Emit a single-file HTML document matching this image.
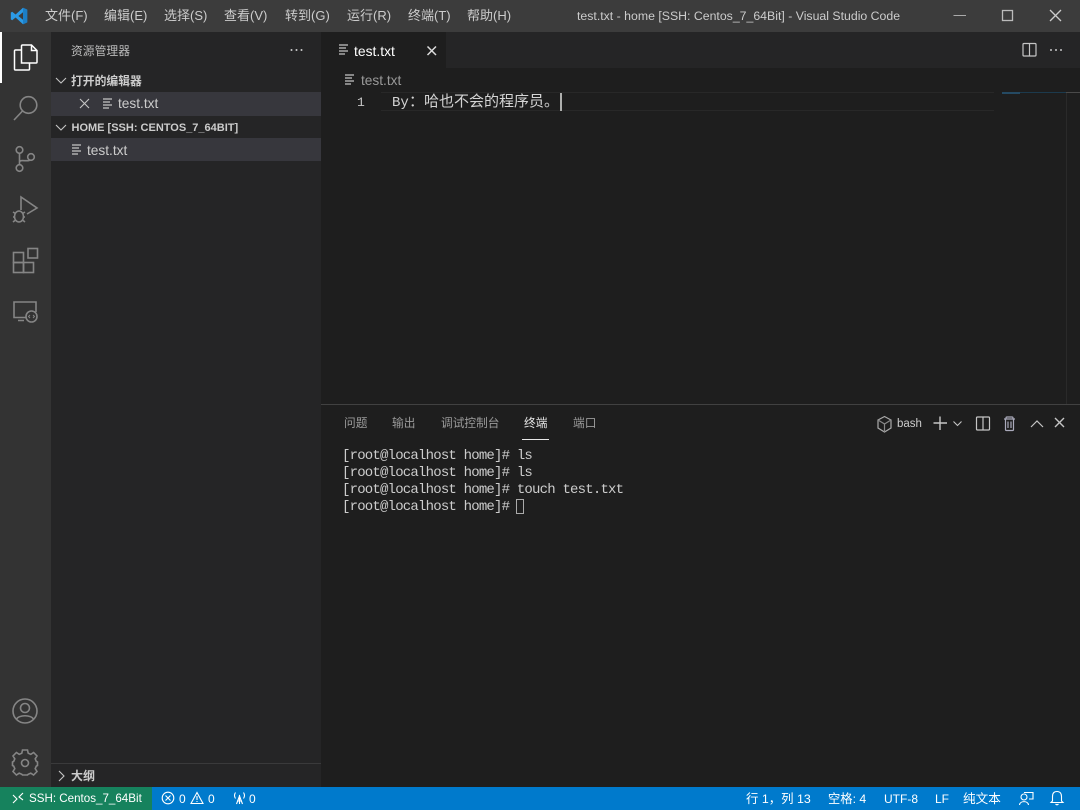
<!DOCTYPE html>
<html lang="zh"><head><meta charset="utf-8"><title>VS Code</title>
<style>
*{margin:0;padding:0;box-sizing:border-box}
html,body{width:1080px;height:810px;overflow:hidden;background:#1e1e1e}
body{position:relative;font-family:"Liberation Sans","Noto Sans CJK SC",sans-serif;font-size:13px;color:#ccc;filter:blur(.3px)}
.a{position:absolute}
.t{position:absolute;white-space:nowrap;line-height:18px}
.m{font-family:"Liberation Mono","Noto Sans CJK SC",monospace}
svg{position:absolute;overflow:visible;fill:none}
.ic{stroke:#858585;stroke-width:1.6}
.fi{stroke:#c5c5c5;stroke-width:1.2}
.s{font-size:12px;color:#fff;top:790px}
.p{font-size:11.7px;color:#9b9b9b;top:415px}
</style></head><body>
<!-- backgrounds -->
<div class="a" style="left:0;top:0;width:1080px;height:32px;background:#3c3c3c"></div>
<div class="a" style="left:0;top:32px;width:51px;height:755px;background:#333"></div>
<div class="a" style="left:51px;top:32px;width:270px;height:755px;background:#252526"></div>
<div class="a" style="left:321px;top:32px;width:759px;height:36px;background:#252526"></div>
<div class="a" style="left:321px;top:32px;width:125px;height:36px;background:#1e1e1e"></div>
<div class="a" style="left:51px;top:92px;width:270px;height:24px;background:#37373d"></div>
<div class="a" style="left:51px;top:138px;width:270px;height:23px;background:#37373d"></div>
<div class="a" style="left:51px;top:763px;width:270px;height:1px;background:#3a3a3b"></div>
<div class="a" style="left:321px;top:404px;width:759px;height:1px;background:#414141"></div>
<div class="a" style="left:0;top:787px;width:1080px;height:23px;background:#007acc"></div>
<div class="a" style="left:0;top:787px;width:152px;height:23px;background:#16825d"></div>
<div class="a" style="left:0;top:32px;width:2px;height:51px;background:#fff"></div>

<!-- title bar -->
<svg style="left:10px;top:7px" width="18" height="18" viewBox="0 0 18 18"><path d="M13 .7 17.2 2.600V15.400L13 17.300 5.600 10.500 2.200 13.200.8 12.400V5.600L2.200 4.800 5.600 7.500Z" fill="#2b9ae6"/><path d="M13 .7 17.200 2.600V15.400L13 17.300Z" fill="#1c7fc7"/><path d="M13 5.200V12.800L8.400 9Z" fill="#3c3c3c"/></svg>
<div class="t" style="left:45px;top:7px">文件(F)</div>
<div class="t" style="left:104px;top:7px">编辑(E)</div>
<div class="t" style="left:164px;top:7px">选择(S)</div>
<div class="t" style="left:224px;top:7px">查看(V)</div>
<div class="t" style="left:285px;top:7px">转到(G)</div>
<div class="t" style="left:347px;top:7px">运行(R)</div>
<div class="t" style="left:408px;top:7px">终端(T)</div>
<div class="t" style="left:467px;top:7px">帮助(H)</div>
<div class="t" style="left:577px;top:7px;font-size:12.300px">test.txt - home [SSH: Centos_7_64Bit] - Visual Studio Code</div>
<svg style="left:0;top:0" width="1080" height="32"><path d="M953.500 15.500H966" stroke="#aaa" stroke-width="1"/><rect x="1002.500" y="10.500" width="10" height="10" stroke="#bbb" stroke-width="1.300"/><path d="M1050 10 1061 21M1061 10 1050 21" stroke="#ccc" stroke-width="1.300"/></svg>

<!-- activity bar -->
<svg style="left:0;top:32px" width="51" height="755">
<g stroke="#fff" stroke-width="1.500"><path d="M21.500 18V14A1 1 0 0 1 22.500 13H31.500L37 18.500V30A1 1 0 0 1 36 31H21.500V18"/><path d="M21.500 18H15.500A1 1 0 0 0 14.500 19V37A1 1 0 0 0 15.500 38H28.500A1 1 0 0 0 29.500 37V31"/><path d="M31.500 13V18.500H37"/></g>
<g class="ic"><circle cx="28.500" cy="73" r="8.300"/><path d="M22.500 79 14 88"/>
<circle cx="19.500" cy="118" r="3.300"/><circle cx="19.500" cy="136" r="3.300"/><circle cx="31" cy="125" r="3.300"/><path d="M19.500 121.500V132.500M19.500 130C19.500 127 28 130 30 128"/>
<path d="M21 178V165L37 176 27 182"/>
<ellipse cx="19" cy="184.500" rx="4.500" ry="5.500"/><path d="M13 180 15.500 181.500M13 185H14.500M13 190 15.500 188M25 180 22.500 181.500M25 185H23.500M25 190 22.500 188"/>
<rect x="13.500" y="220.500" width="10" height="10"/><rect x="13.500" y="230.500" width="10" height="10"/><rect x="23.500" y="230.500" width="10" height="10"/><rect x="28" y="216.500" width="9.500" height="9.500"/>
<path d="M26 285.500H14V270H36V280M18 288.500H24"/><circle cx="31.500" cy="284.500" r="5.500"/><path d="M30 283 28.500 284.500 30 286M33 283 34.500 284.500 33 286" stroke-width="1"/>
<circle cx="25" cy="679" r="12"/><circle cx="25" cy="676" r="4.500"/><path d="M16.500 687.500C18 682.500 32 682.500 33.500 687.500"/>
<path d="M22.500 718H27.500L28.200 721.200 30.800 722.300 33.600 720.500 37 724 35.200 726.800 36.300 729.400 37.500 730V733.500L36.300 734.100 35.200 736.700 37 739.500 33.600 743 30.800 741.200 28.200 742.300 27.500 743H22.500L21.800 742.300 19.200 741.200 16.400 743 13 739.500 14.800 736.700 13.700 734.100 12.500 733.500V730L13.700 729.400 14.800 726.800 13 724 16.400 720.500 19.200 722.300 21.800 721.200Z"/><circle cx="25" cy="731" r="3.500"/>
</g></svg>

<!-- sidebar -->
<div class="t" style="left:71px;top:42px;font-size:11.800px;color:#bbb">资源管理器</div>
<svg style="left:51px;top:32px" width="270" height="755"><g fill="#ccc"><circle cx="240.500" cy="18" r="1"/><circle cx="245.500" cy="18" r="1"/><circle cx="250.500" cy="18" r="1"/></g><g stroke="#c5c5c5" stroke-width="1.100"><path d="M5 46 10 51 15 46M5 93 10 98 15 93"/><path d="M29 67 38 76M38 67 29 76"/><path d="M8 739 13 744 8 749"/></g>
<g class="fi"><path d="M52 67H61M52 70H59M52 73H61M52 76H58"/><path d="M21 113H30M21 116H28M21 119H30M21 122H27"/></g></svg>
<div class="t" style="left:71px;top:72px;font-size:11.800px;font-weight:bold">打开的编辑器</div>
<div class="t" style="left:118px;top:95px;font-size:13.700px">test.txt</div>
<div class="t" style="left:71.500px;top:119px;font-size:11px;font-weight:bold">HOME [SSH: CENTOS_7_64BIT]</div>
<div class="t" style="left:87px;top:142px;font-size:13.700px">test.txt</div>
<div class="t" style="left:71px;top:767px;font-size:12px;font-weight:bold">大纲</div>

<!-- tabs -->
<svg style="left:321px;top:32px" width="759" height="70">
<g class="fi"><path d="M18 13H27M18 16H25M18 19H27M18 22H24"/><path d="M24 43H33M24 46H31M24 49H33M24 52H30"/></g>
<path d="M106.500 14.500 115 23M115 14.500 106.500 23" stroke="#ddd" stroke-width="1.500"/>
<g stroke="#c5c5c5" stroke-width="1.200"><rect x="702" y="11.500" width="13" height="12.500" rx="1"/><path d="M708.500 11.500V24"/></g>
<g fill="#c5c5c5"><circle cx="730" cy="18" r="1"/><circle cx="735" cy="18" r="1"/><circle cx="740" cy="18" r="1"/></g>
</svg>
<div class="t" style="left:354px;top:42px;color:#fff;font-size:13.900px">test.txt</div>
<div class="t" style="left:361px;top:72px;color:#999;font-size:13.700px">test.txt</div>

<!-- editor -->
<div class="a" style="left:381px;top:92px;width:613px;height:1px;background:#282828"></div>
<div class="a" style="left:381px;top:110px;width:613px;height:1px;background:#282828"></div>
<div class="a" style="left:1002px;top:92px;width:64px;height:1px;background:#1c3a4d"></div>
<div class="a" style="left:1002px;top:92px;width:18px;height:2px;background:#254a63"></div>
<div class="a" style="left:1066px;top:92px;width:14px;height:1px;background:#4a4a4a"></div>
<div class="a" style="left:1066px;top:93px;width:1px;height:311px;background:#2a2a2a"></div>
<div class="t m" style="left:357px;top:94px;font-size:13px;color:#c6c6c6">1</div>
<div class="t m" style="left:392px;top:94px;font-size:14px;color:#d4d4d4">By</div>
<div class="t m" style="left:409px;top:93.500px;font-size:15px;color:#d4d4d4">：哈也不会的程序员。</div>
<div class="a" style="left:560px;top:93px;width:2px;height:18px;background:#aeafad"></div>

<!-- panel -->
<div class="t p" style="left:344px">问题</div>
<div class="t p" style="left:392px">输出</div>
<div class="t p" style="left:441px">调试控制台</div>
<div class="t p" style="left:524px;color:#e7e7e7">终端</div>
<div class="t p" style="left:573px">端口</div>
<div class="a" style="left:522px;top:439px;width:27px;height:1px;background:#e7e7e7"></div>
<div class="t" style="left:897px;top:415px;font-size:11.500px">bash</div>
<svg style="left:860px;top:405px" width="220" height="40"><g stroke="#c5c5c5" stroke-width="1.200">
<path d="M24.500 11.500 31 15V23L24.500 27 18 23V15Z" stroke="#aaa"/><path d="M18 15 24.500 19V27M24.500 19 31 15" stroke="#888"/>
<path d="M73.500 18H87M80 11.500V25" stroke-width="1.400"/>
<path d="M93.500 16.500 97.500 20.500 101.500 16.500" stroke-width="1.100"/>
<rect x="116.500" y="12" width="13" height="13" rx="1"/><path d="M123 12V25"/>
<path d="M144 14H155M146 14V13Q146 12 147 12H152Q153 12 153 13V14M145.500 14V24.500Q145.500 25.500 146.500 25.500H152.500Q153.500 25.500 153.500 24.500V14M148 16.500V23M151 16.500V23" stroke="#aab"/>
<path d="M171 22 177 16 183 22"/>
<path d="M195 13 204 22M204 13 195 22" stroke-width="1.400"/>
</g></svg>
<div class="m" style="position:absolute;left:342px;top:448px;font-size:14px;line-height:17px;color:#ccc;white-space:pre;letter-spacing:-.8px">[root@localhost home]# ls
[root@localhost home]# ls
[root@localhost home]# touch test.txt
[root@localhost home]# </div>
<div class="a" style="left:516px;top:499px;width:8px;height:15px;border:1px solid #aaa"></div>

<!-- status bar -->
<svg style="left:0;top:787px" width="1080" height="23"><g stroke="#fff" stroke-width="1.100">
<path d="M13 8 17 12 13 16M23 6 19 10 23 13"/>
<circle cx="168" cy="11" r="5.800"/><path d="M165.500 8.500 170.500 13.500M170.500 8.500 165.500 13.500"/>
<path d="M197 5.500 203 16.500H191Z"/><path d="M197 9V13M197 14V15"/>
<path d="M239.500 8V17M236.500 17 239.500 9 242.500 17M237 14H242"/><path d="M235.500 5.500Q233.500 8.500 235.500 11.500M243.500 5.500Q245.500 8.500 243.500 11.500"/>
<circle cx="1024" cy="10" r="3"/><path d="M1019.500 18C1020 13.500 1028 13.500 1028.500 18M1024 5.500H1033V12H1029"/>
<path d="M1057 4.500C1053.500 4.500 1052.500 7 1052.500 9.500V14L1051 15.500H1063L1061.500 14V9.500C1061.500 7 1060.500 4.500 1057 4.500ZM1055.500 17Q1057 18.500 1058.500 17"/>
</g></svg>
<div class="t s" style="left:29px;font-size:11.600px">SSH: Centos_7_64Bit</div>
<div class="t s" style="left:179px">0</div>
<div class="t s" style="left:208px">0</div>
<div class="t s" style="left:249px">0</div>
<div class="t s" style="left:746px;font-size:12.400px">行 1，列 13</div>
<div class="t s" style="left:828px;font-size:12.300px">空格: 4</div>
<div class="t s" style="left:884px">UTF-8</div>
<div class="t s" style="left:935px">LF</div>
<div class="t s" style="left:963px;font-size:12.600px">纯文本</div>
</body></html>
